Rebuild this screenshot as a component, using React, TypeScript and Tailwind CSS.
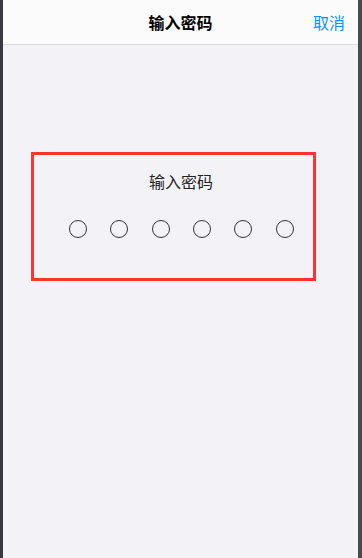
import React from 'react';

const DOTS = [0, 1, 2, 3, 4, 5];

const App: React.FC = () => {
  return (
    <div
      className="flex h-[558px] w-[362px] bg-[#3d3c42]"
      style={{ fontFamily: '"Noto Sans CJK SC", "Noto Sans", sans-serif' }}
    >
      <div className="w-[3px] bg-[#3a3840]" />
      <div className="flex flex-1 flex-col bg-[#f3f2f7]">
        {/* header */}
        <div className="relative flex h-[45px] items-center justify-center border-b border-[#dcdcdf] bg-[#fbfbfb]">
          <span className="text-[16px] font-semibold text-black">输入密码</span>
          <span className="absolute right-[13px] top-[10px] text-[16px] leading-[24px] text-[#1a8cf7]">取消</span>
        </div>

        {/* password box */}
        <div className="ml-[28px] mt-[107px] h-[129px] w-[285px] border-[3px] border-[#ff3333] pt-[15px]">
          <p className="pl-[15px] text-center text-[16px] leading-[22px] text-[#222]">输入密码</p>
          <div className="ml-[23.5px] mt-[28px] grid w-[248px] grid-cols-6">
            {DOTS.map((i) => (
              <div key={i} className="flex justify-center">
                <div className="h-[18px] w-[18px] rounded-full border border-[#333]" />
              </div>
            ))}
          </div>
        </div>
      </div>
      <div className="w-[4px] bg-[#4a4a4a]" />
    </div>
  );
};

export default App;
